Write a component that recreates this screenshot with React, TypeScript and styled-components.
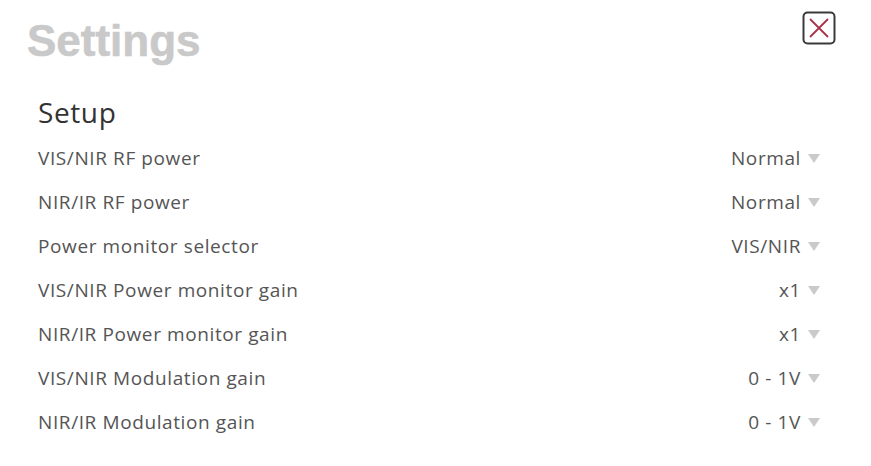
import styled, { createGlobalStyle } from 'styled-components';

const GlobalStyle = createGlobalStyle`
    html, body {
        margin: 0;
        padding: 0;
        background: #ffffff;
    }
`

const settings = [
    { label: "VIS/NIR RF power", value: "Normal" },
    { label: "NIR/IR RF power", value: "Normal" },
    { label: "Power monitor selector", value: "VIS/NIR" },
    { label: "VIS/NIR Power monitor gain", value: "x1" },
    { label: "NIR/IR Power monitor gain", value: "x1" },
    { label: "VIS/NIR Modulation gain", value: "0 - 1V" },
    { label: "NIR/IR Modulation gain", value: "0 - 1V" },
];

function CloseIcon() {
    return (
        <svg width="34" height="34" viewBox="0 0 34 34">
            <rect x="1.5" y="1.5" width="31" height="31" rx="4" fill="none" stroke="#3a3a3a" strokeWidth="2" />
            <path d="M8 8 L26 26 M26 8 L8 26" stroke="#a8324c" strokeWidth="1.8" />
        </svg>
    );
}

function App() {
    return (
        <Page>
            <GlobalStyle />
            <Header>
                <Title>Settings</Title>
                <CloseButton aria-label="close"><CloseIcon /></CloseButton>
            </Header>
            <Section>
                <SectionTitle>Setup</SectionTitle>
                <List>
                    {settings.map((s) => (
                        <Row key={s.label}>
                            <Label>{s.label}</Label>
                            <Select>
                                {s.value}
                                <Arrow />
                            </Select>
                        </Row>
                    ))}
                </List>
            </Section>
        </Page>
    )
}

export default App;

const Page = styled.div`
    width: 871px;
    height: 466px;
    box-sizing: border-box;
    padding: 11px 35px 0 27px;
    font-family: "Open Sans", "Noto Sans", sans-serif;
`

const Header = styled.div`
    display: flex;
    justify-content: space-between;
    align-items: flex-start;
`

const Title = styled.h1`
    margin: 8px 0 0 0;
    font-family: "Liberation Sans", Arial, sans-serif;
    font-weight: 700;
    font-size: 44px;
    line-height: 44px;
    color: #c9c9c9;
    -webkit-text-stroke: 0.6px #c9c9c9;
`

const CloseButton = styled.button`
    border: none;
    background: none;
    padding: 0;
    margin: 0;
    width: 34px;
    height: 34px;
    cursor: pointer;
    svg { display: block; }
`

const Section = styled.div`
    padding: 30px 16px 0 11px;
`

const SectionTitle = styled.h2`
    margin: 0 0 5px 0;
    font-weight: 400;
    font-size: 28px;
    line-height: 38px;
    letter-spacing: 0.6px;
    color: #333333;
`

const List = styled.div`
    display: flex;
    flex-direction: column;
`

const Row = styled.div`
    display: flex;
    justify-content: space-between;
    align-items: center;
    height: 44px;
    font-size: 19px;
    letter-spacing: 0.6px;
    color: #555555;
`

const Label = styled.span``

const Select = styled.span`
    display: flex;
    align-items: center;
    gap: 7px;
`

const Arrow = styled.span`
    width: 0;
    height: 0;
    margin-top: 1px;
    border-left: 6px solid transparent;
    border-right: 6px solid transparent;
    border-top: 9px solid #cacaca;
`
